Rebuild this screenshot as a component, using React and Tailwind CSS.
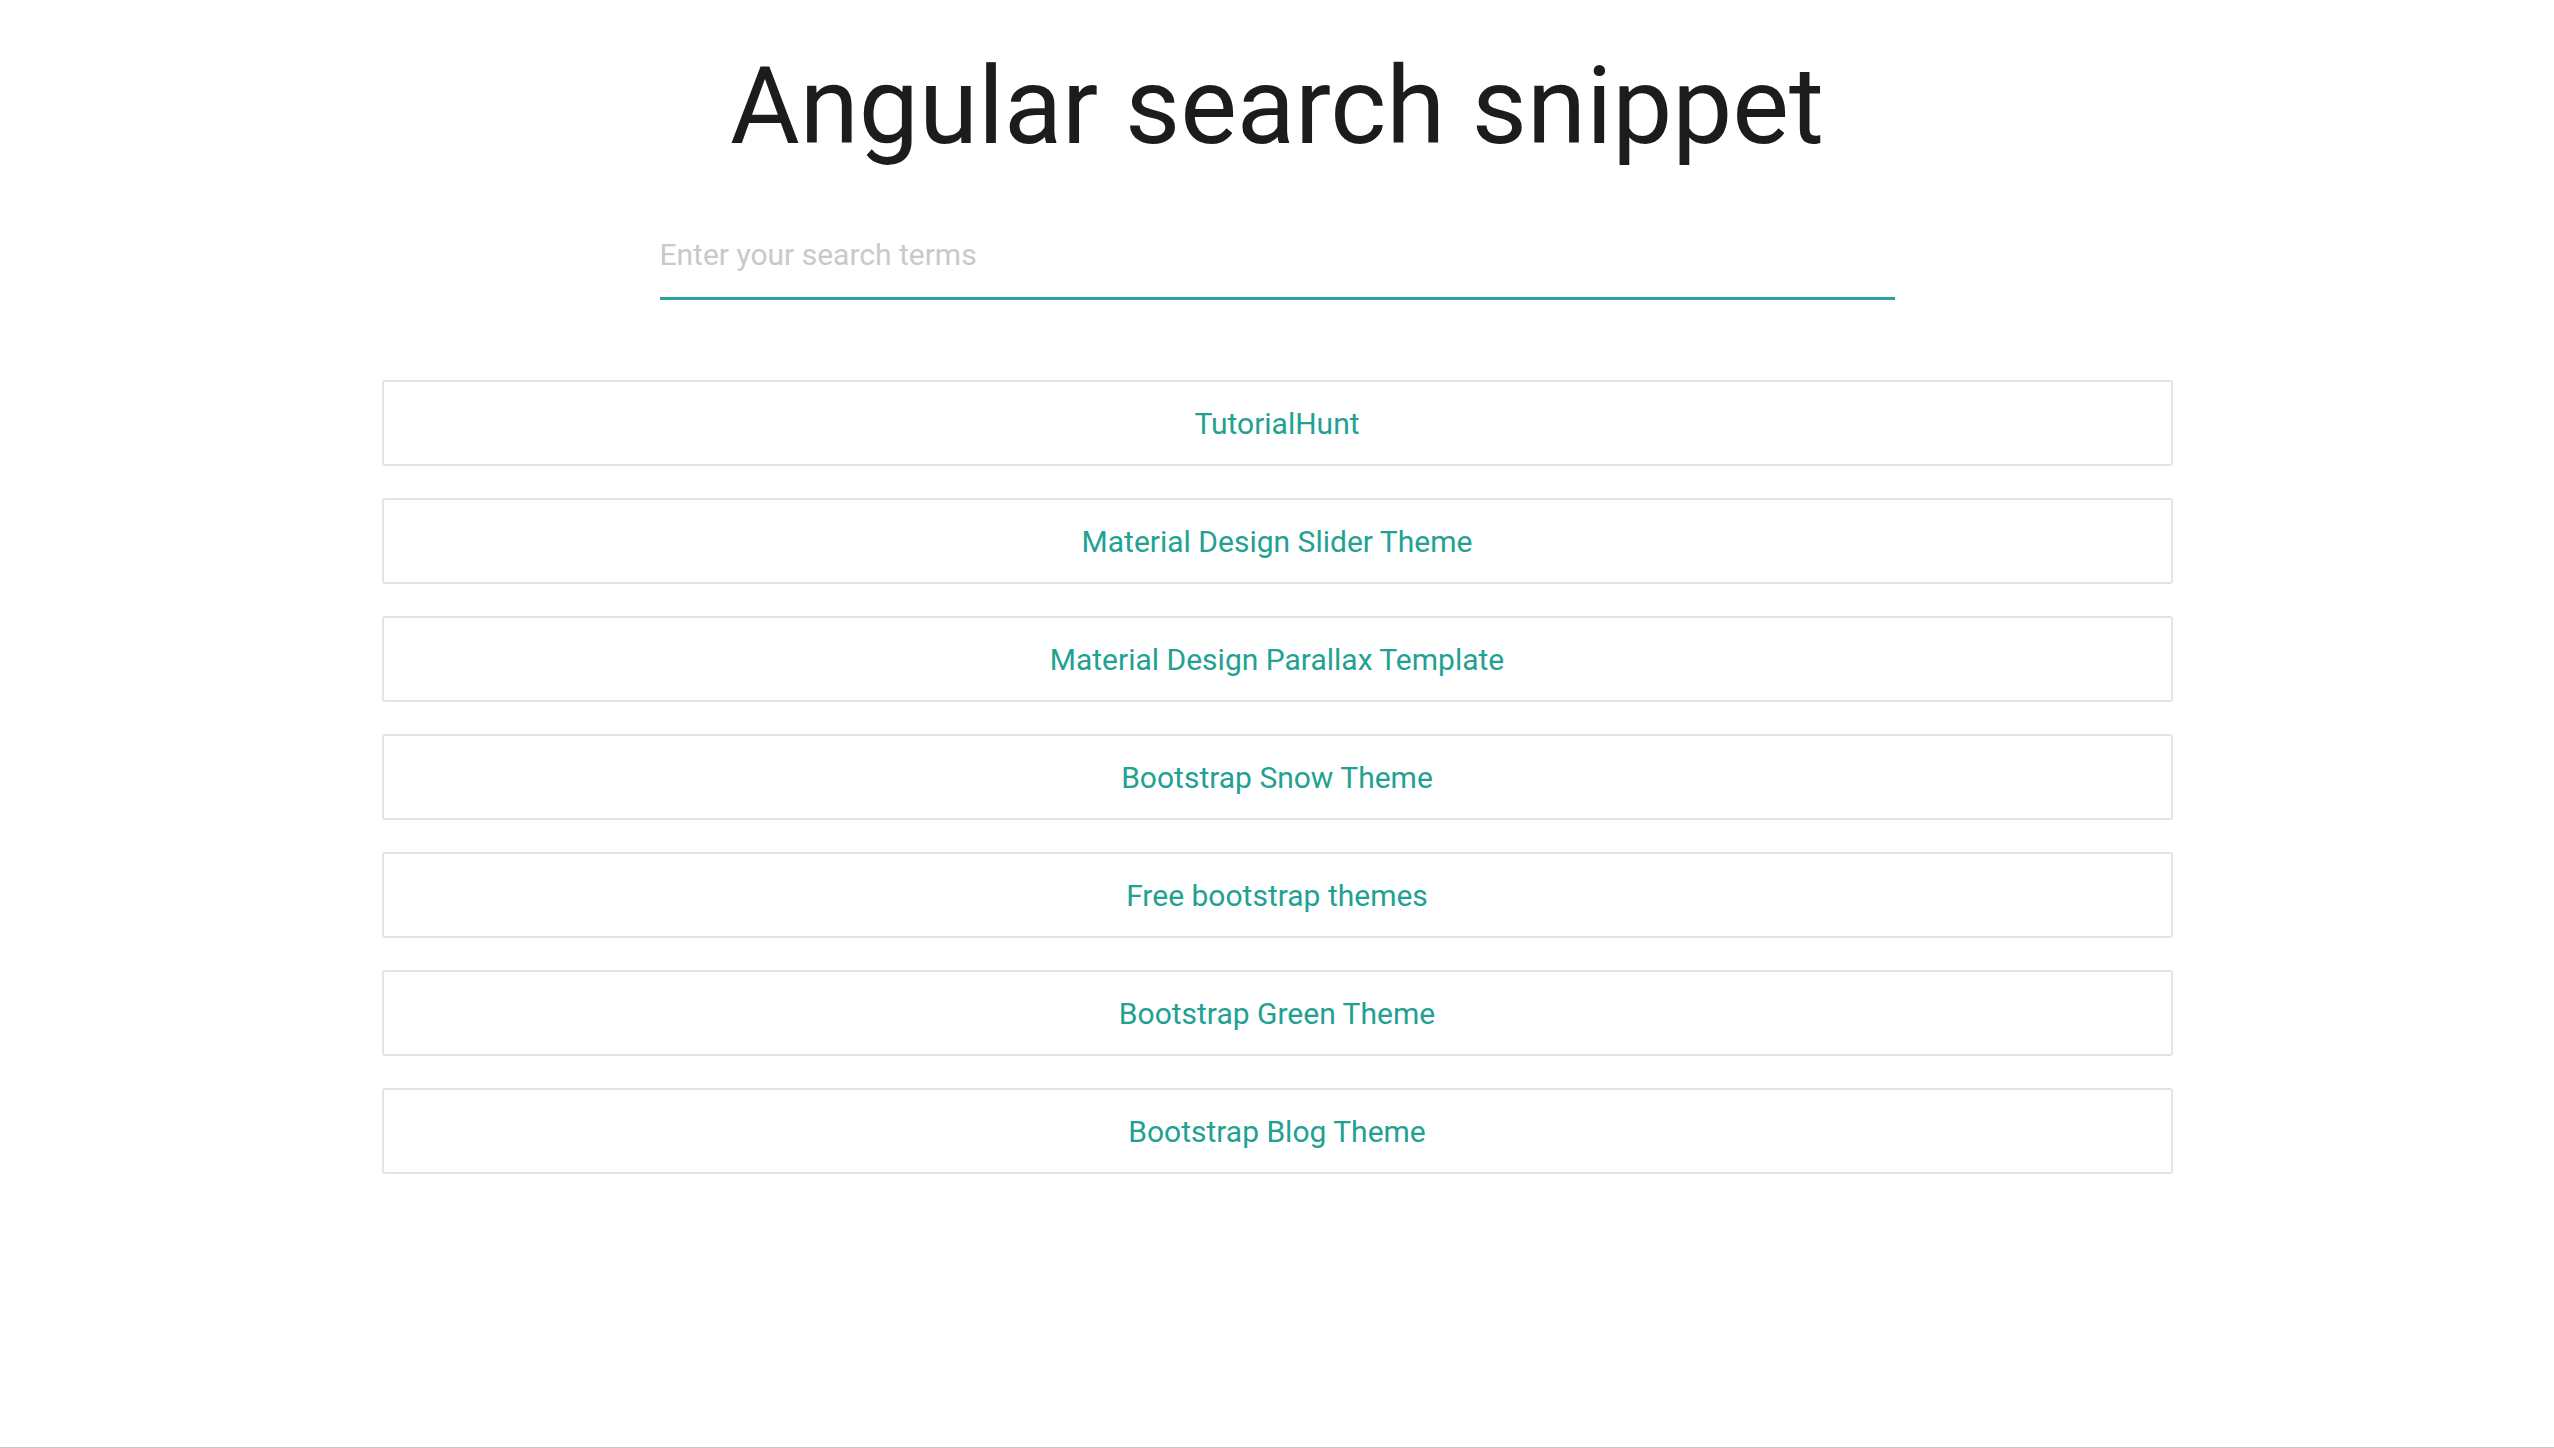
import React, { useState } from "react";

const links = [
  "TutorialHunt",
  "Material Design Slider Theme",
  "Material Design Parallax Template",
  "Bootstrap Snow Theme",
  "Free bootstrap themes",
  "Bootstrap Green Theme",
  "Bootstrap Blog Theme",
];

export default function App() {
  const [q, setQ] = useState("");
  const shown = links.filter((l) => l.toLowerCase().includes(q.toLowerCase()));

  return (
    <div className="h-[1448px] bg-white border-b border-[#c8c8c8] font-['Roboto','Liberation_Sans',sans-serif]">
      <h1 className="pt-[53px] text-center text-[107px] leading-none font-normal text-[#1c1c1c]">
        Angular search snippet
      </h1>

      <div className="mt-[76px] mx-auto w-[1235px]">
        <input
          value={q}
          onChange={(e) => setQ(e.target.value)}
          placeholder="Enter your search terms"
          className="block w-full box-content h-[36px] pt-0 pb-[25px] text-[30px] text-[#333] placeholder:text-[#c9c9c9] border-b-[3px] border-[#26a69a] outline-none bg-transparent"
        />
      </div>

      <ul className="mt-[80px] mx-auto w-[1791px] flex flex-col gap-[32px]">
        {shown.map((l) => (
          <li key={l}>
            <a
              href="#"
              className="flex h-[86px] items-center justify-center rounded-[3px] border-2 border-[#e4e4e4] text-[30px] text-[#22a193]"
            >
              {l}
            </a>
          </li>
        ))}
      </ul>
    </div>
  );
}
